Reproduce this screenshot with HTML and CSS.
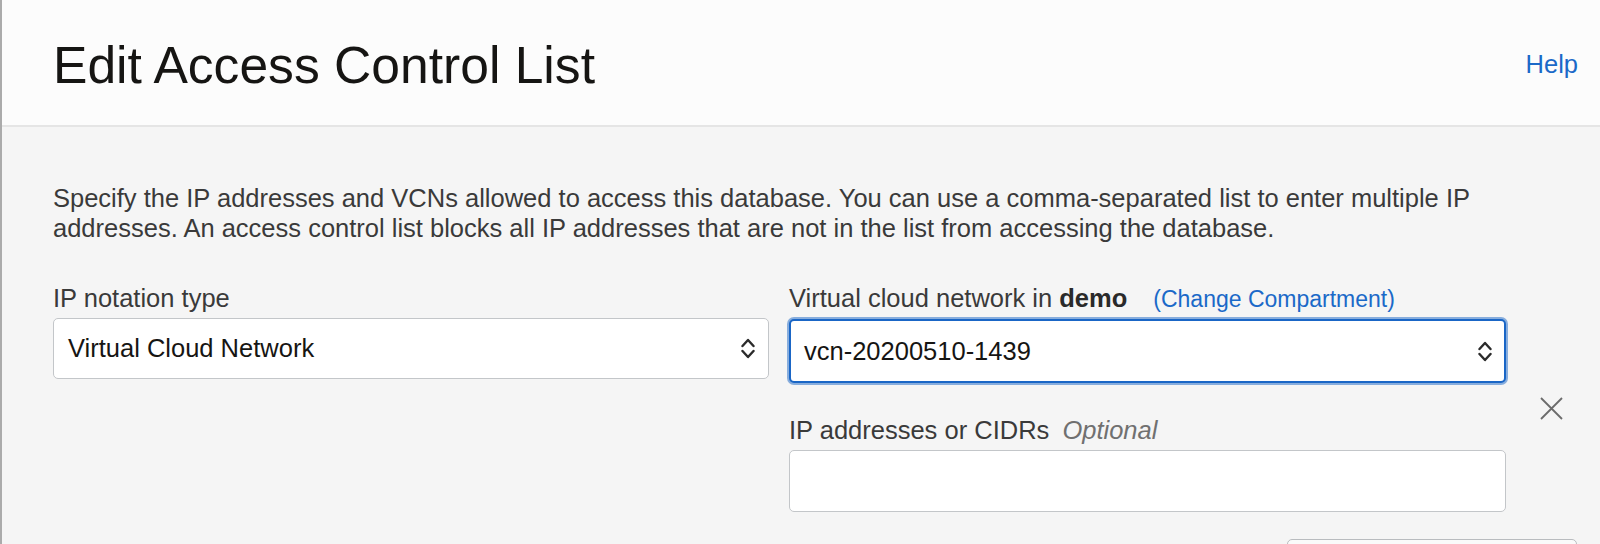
FILE: index.html
```html
<!DOCTYPE html>
<html lang="en">
<head>
<meta charset="utf-8">
<title>Edit Access Control List</title>
<link rel="stylesheet" href="styles.css">
</head>
<body>
<div class="panel">
  <header class="panel-header">
    <h1 class="panel-title">Edit Access Control List</h1>
    <a class="help-link" href="#">Help</a>
  </header>
  <main class="panel-body">
    <p class="intro">Specify the IP addresses and VCNs allowed to access this database. You can use a comma-separated list to enter multiple IP addresses. An access control list blocks all IP addresses that are not in the list from accessing the database.</p>
    <div class="acl-row">
      <div class="field">
        <div class="field-label">IP notation type</div>
        <div class="select">
          <span class="select-value">Virtual Cloud Network</span>
          <svg class="chevrons" viewBox="0 0 14 25" width="14" height="25" aria-hidden="true">
            <path d="M1.5 10 L7 4 L12.5 10" />
            <path d="M1.5 15 L7 21 L12.5 15" />
          </svg>
        </div>
      </div>
      <div class="field">
        <div class="field-label">Virtual cloud network in <b>demo</b><a class="change-link" href="#">(Change Compartment)</a></div>
        <div class="select select-focused">
          <span class="select-value vcn">vcn-20200510-1439</span>
          <svg class="chevrons" viewBox="0 0 14 25" width="14" height="25" aria-hidden="true">
            <path d="M1.5 10 L7 4 L12.5 10" />
            <path d="M1.5 15 L7 21 L12.5 15" />
          </svg>
        </div>
        <div class="field-label second">IP addresses or CIDRs <span class="optional">Optional</span></div>
        <div class="text-input"></div>
      </div>
      <button class="remove" type="button" aria-label="Remove">
        <svg viewBox="0 0 23 23" width="23" height="23" aria-hidden="true">
          <path d="M1 1 L22 22 M22 1 L1 22" />
        </svg>
      </button>
    </div>
    <div class="actions">
      <button class="add-btn" type="button"></button>
    </div>
  </main>
</div>
</body>
</html>
```

FILE: styles.css
```css
* { box-sizing: border-box; }
html, body { margin: 0; padding: 0; }
body {
  font-family: "Liberation Sans", Arial, sans-serif;
  background: #f5f5f5;
  color: #161513;
  height: 544px;
  overflow: hidden;
}
.panel {
  border-left: 2px solid #ababab;
  height: 544px;
  overflow: hidden;
  background: #f5f5f5;
}
.panel-header {
  height: 127px;
  background: #fcfcfc;
  border-bottom: 2px solid #e5e5e5;
  display: flex;
  justify-content: space-between;
  align-items: flex-start;
  padding: 0 22px 0 51px;
}
.panel-title {
  margin: 0;
  padding-top: 35px;
  font-weight: normal;
  font-size: 51.6px;
  line-height: 60px;
  color: #161513;
}
.help-link {
  margin-top: 49px;
  font-size: 25.5px;
  line-height: 30px;
  color: #1b69c8;
  text-decoration: none;
}
.panel-body {
  padding: 56px 0 0 51px;
}
.intro {
  margin: 0 0 40px;
  font-size: 25.5px;
  line-height: 30px;
  color: #3a3a3a;
}
.acl-row {
  display: grid;
  grid-template-columns: 716px 717px auto;
  column-gap: 20px;
  align-items: start;
}
.field { display: flex; flex-direction: column; }
.field-label {
  font-size: 25.5px;
  line-height: 30px;
  color: #3a3a3a;
  margin-bottom: 5px;
  white-space: nowrap;
}
.field-label b { color: #2a2a2a; }
.field-label.second { margin-top: 32px; }
.change-link {
  margin-left: 26px;
  font-size: 23px;
  color: #1b69c8;
  text-decoration: none;
}
.optional {
  margin-left: 6px;
  font-style: italic;
  color: #707070;
}
.select {
  height: 61px;
  background: #fff;
  border: 1px solid #c3c6c9;
  border-radius: 5px;
  display: flex;
  align-items: center;
  justify-content: space-between;
  padding: 0 13px 0 14px;
}
.select-focused {
  height: 64px;
  border: 2px solid #1a66c6;
  box-shadow: 0 0 0 2px rgba(26, 102, 198, 0.5);
  padding: 0 12px 0 13px;
}
.select-value {
  font-size: 25.5px;
  color: #161513;
}
.chevrons {
  fill: none;
  stroke: #2b2b2b;
  stroke-width: 2.4;
  stroke-linecap: round;
  stroke-linejoin: round;
}
.text-input {
  height: 62px;
  background: #fff;
  border: 1px solid #c3c6c9;
  border-radius: 5px;
}
.remove {
  margin: 114px 0 0 14px;
  padding: 0;
  width: 23px;
  height: 23px;
  border: 0;
  background: none;
  display: block;
}
.remove svg {
  display: block;
  fill: none;
  stroke: #6b6b6b;
  stroke-width: 1.8;
}
.actions {
  display: flex;
  justify-content: flex-end;
  padding-right: 23px;
  margin-top: 27px;
}
.add-btn {
  width: 290px;
  height: 56px;
  background: #fafafa;
  border: 1px solid #b9bcbf;
  border-radius: 5px;
}
```
